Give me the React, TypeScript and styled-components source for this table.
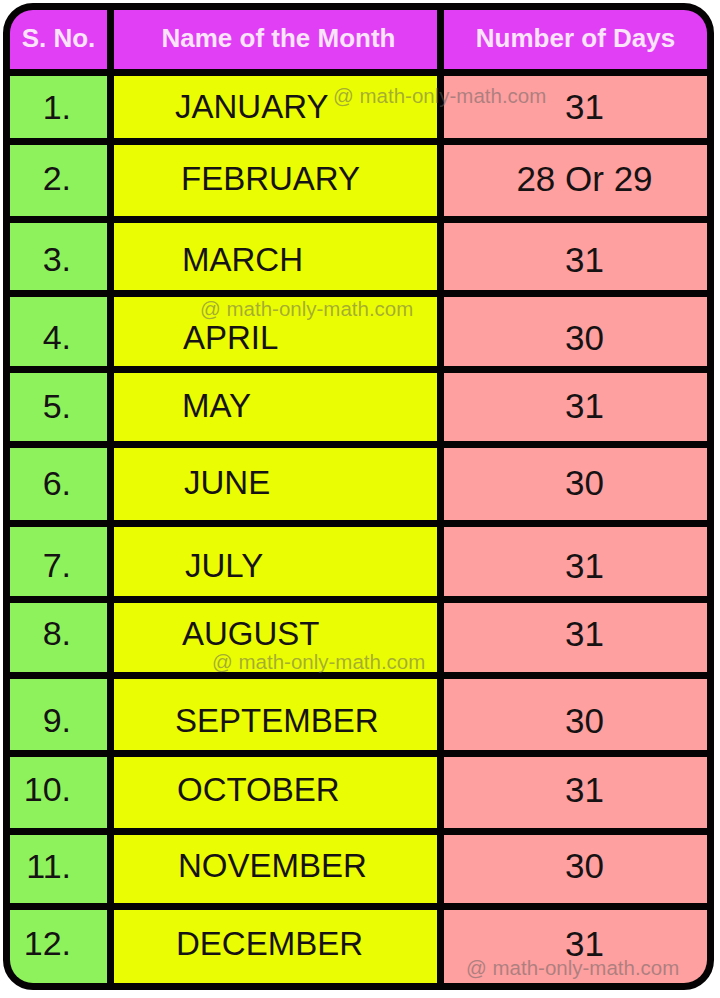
import { Fragment } from "react";
import styled, { createGlobalStyle } from "styled-components";

const GlobalStyle = createGlobalStyle`
    html, body {
        margin: 0;
        padding: 0;
        background: #ffffff;
    }
    body {
        font-family: "Liberation Sans", Arial, sans-serif;
    }
`;

const Page = styled.div`
    width: 720px;
    height: 998px;
    padding: 3px 0 0 3px;
    box-sizing: border-box;
`;

const Frame = styled.div`
    position: relative;
    width: 711px;
`;

const Table = styled.div`
    display: grid;
    grid-template-columns: 97px 323px 263px;
    grid-template-rows: 59px 62px 71px 67px 69px 68px 72px 69px 69px 71px 71px 68px 73px;
    gap: 7px;
    background: #050303;
    border: 7px solid #050303;
    border-radius: 30px;
    overflow: hidden;
`;

const HeaderCell = styled.div<{ $shift?: number }>`
    background: #e13ff5;
    color: #fae4fa;
    font-weight: bold;
    font-size: 26px;
    display: flex;
    align-items: center;
    justify-content: center;
    padding-bottom: 2px;
    padding-left: ${(p) => p.$shift ?? 0}px;
    box-sizing: border-box;
`;

const BodyCell = styled.div<{ $dy: number }>`
    display: flex;
    align-items: center;
    font-size: 34px;
    color: #161213;
    padding-top: ${(p) => (p.$dy > 0 ? p.$dy * 2 : 0)}px;
    padding-bottom: ${(p) => (p.$dy < 0 ? -p.$dy * 2 : 0)}px;
    box-sizing: border-box;
`;

const NumCell = styled(BodyCell)`
    background: #8ef25d;
    justify-content: flex-end;
    padding-right: 36px;
`;

const MonthCell = styled(BodyCell)<{ $indent: number }>`
    background: #ebfd02;
    font-size: 33px;
    padding-left: ${(p) => p.$indent}px;
`;

const DaysCell = styled(BodyCell)`
    background: #fda09f;
    justify-content: center;
    padding-left: 18px;
    font-size: 35px;
`;

const Watermark = styled.span<{ $x: number; $y: number }>`
    position: absolute;
    left: ${(p) => p.$x}px;
    top: ${(p) => p.$y}px;
    font-size: 20.5px;
    line-height: 20px;
    color: rgba(95, 95, 95, 0.5);
    white-space: nowrap;
    pointer-events: none;
`;

interface Row {
    no: string;
    month: string;
    days: string;
    indent: number;
    dy: number;
}

const rows: Row[] = [
    { no: "1.", month: "JANUARY", days: "31", indent: 61, dy: 0 },
    { no: "2.", month: "FEBRUARY", days: "28 Or 29", indent: 67, dy: -2 },
    { no: "3.", month: "MARCH", days: "31", indent: 68, dy: 3 },
    { no: "4.", month: "APRIL", days: "30", indent: 69, dy: 6 },
    { no: "5.", month: "MAY", days: "31", indent: 68, dy: -1 },
    { no: "6.", month: "JUNE", days: "30", indent: 70, dy: -1 },
    { no: "7.", month: "JULY", days: "31", indent: 71, dy: 4 },
    { no: "8.", month: "AUGUST", days: "31", indent: 68, dy: -4 },
    { no: "9.", month: "SEPTEMBER", days: "30", indent: 61, dy: 6 },
    { no: "10.", month: "OCTOBER", days: "31", indent: 63, dy: -3 },
    { no: "11.", month: "NOVEMBER", days: "30", indent: 64, dy: -3 },
    { no: "12.", month: "DECEMBER", days: "31", indent: 62, dy: -3 },
];

const marks = [
    { x: 330, y: 83 },
    { x: 197, y: 296 },
    { x: 209, y: 649 },
    { x: 463, y: 955 },
];

function App(): JSX.Element {
    return (
        <Page>
            <GlobalStyle />
            <Frame>
                <Table>
                    <HeaderCell>S. No.</HeaderCell>
                    <HeaderCell $shift={6}>Name of the Month</HeaderCell>
                    <HeaderCell>Number of Days</HeaderCell>
                    {rows.map((r) => (
                        <Fragment key={r.no}>
                            <NumCell $dy={r.dy}>{r.no}</NumCell>
                            <MonthCell $dy={r.dy} $indent={r.indent}>{r.month}</MonthCell>
                            <DaysCell $dy={r.dy}>{r.days}</DaysCell>
                        </Fragment>
                    ))}
                </Table>
                {marks.map((m, i) => (
                    <Watermark key={i} $x={m.x} $y={m.y}>@ math-only-math.com</Watermark>
                ))}
            </Frame>
        </Page>
    );
}

export default App;
